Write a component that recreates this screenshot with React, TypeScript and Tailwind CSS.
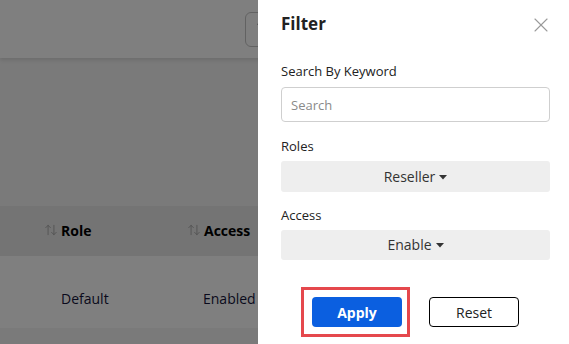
import React from "react";
import { ArrowUpDown, Filter, X } from "lucide-react";

function Caret() {
  return (
    <svg width="8" height="5" viewBox="0 0 8 5" className="ml-[4px] mt-[2px]">
      <path d="M0 0h8L4 4.5z" fill="#333" />
    </svg>
  );
}

function SortHead({ label }: { label: string }) {
  return (
    <div className="flex w-[143px] items-center">
      <ArrowUpDown size={14} strokeWidth={1.3} className="-ml-[1px] text-[#9a9a9a]" />
      <span className="ml-[3px] text-[14px] font-bold text-black">{label}</span>
    </div>
  );
}

export default function App() {
  return (
    <div
      className="relative h-[344px] w-[569px] overflow-hidden bg-[#f4f4f4]"
      style={{ fontFamily: '"Open Sans", "Noto Sans", sans-serif' }}
    >
      {/* page behind the drawer */}
      <div className="flex h-[58px] items-center bg-white pl-[245px] shadow-[0_2px_4px_rgba(0,0,0,0.12)]">
        <button className="flex h-[35px] w-[90px] items-center rounded-[6px] border border-[#c4c4c4] pl-[11px] text-[#222]">
          <Filter size={14} />
        </button>
      </div>
      <div className="mt-[148px]">
        <div className="flex h-[50px] items-center bg-[#e8e8e8] pl-[45px] pb-[2px]">
          <SortHead label="Role" />
          <SortHead label="Access" />
        </div>
        <div className="flex h-[72px] items-center bg-white pl-[61px] pt-[12px] text-[14px] text-[#14143a]">
          <span className="w-[142px]">Default</span>
          <span>Enabled</span>
        </div>
      </div>

      {/* overlay */}
      <div className="absolute inset-0 bg-black/50" />

      {/* filter drawer */}
      <div className="absolute bottom-0 right-0 top-0 w-[311px] bg-white pl-[23px] pr-[19px] text-[#222]">
        <div className="mt-[12px] flex h-[24px] items-center justify-between">
          <h2 className="text-[17px] font-bold leading-[24px]">Filter</h2>
          <X size={24} strokeWidth={1.1} className="-mr-[3px] mt-[2px] text-[#9a9a9a]" />
        </div>

        <label className="mt-[26px] block text-[13px] leading-[18px]">Search By Keyword</label>
        <input
          placeholder="Search"
          className="mt-[7px] block h-[35px] w-full rounded-[4px] border border-[#cfcfcf] px-[9px] text-[13px] placeholder:text-[#8a8a8a] outline-none"
        />

        <label className="mt-[15px] block text-[13px] leading-[18px]">Roles</label>
        <button className="mt-[6px] flex h-[31px] w-full items-center justify-center rounded-[3px] bg-[#eeeeee] pb-[1px] text-[14px] text-[#333]">
          Reseller
          <Caret />
        </button>

        <label className="mt-[14px] block text-[13px] leading-[18px]">Access</label>
        <button className="mt-[6px] flex h-[30px] w-full items-center justify-center rounded-[3px] bg-[#eeeeee] pb-[1px] text-[14px] text-[#333]">
          Enable
          <Caret />
        </button>

        <div className="mt-[27px] flex items-center pl-[20px]">
          <div className="border-[3px] border-[#e5484d] py-[7px] pl-[8px] pr-[5px]">
            <button className="h-[30px] w-[90px] rounded-[4px] bg-[#0b5fe0] text-[14px] font-bold text-white">
              Apply
            </button>
          </div>
          <button className="ml-[19px] h-[30px] w-[90px] rounded-[4px] border border-black text-[14px] text-[#222]">
            Reset
          </button>
        </div>
      </div>
    </div>
  );
}
